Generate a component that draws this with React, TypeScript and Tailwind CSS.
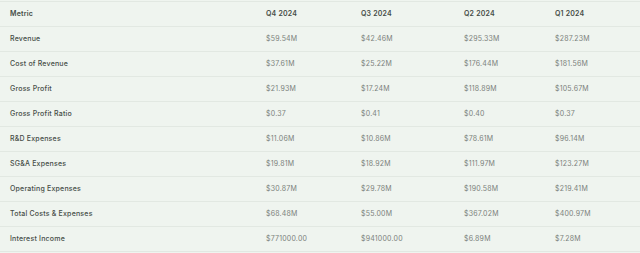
import React from "react"

const quarters = ["Q4 2024", "Q3 2024", "Q2 2024", "Q1 2024"]

const rows: [string, string[]][] = [
  ["Revenue", ["$59.54M", "$42.46M", "$295.33M", "$287.23M"]],
  ["Cost of Revenue", ["$37.61M", "$25.22M", "$176.44M", "$181.56M"]],
  ["Gross Profit", ["$21.93M", "$17.24M", "$118.89M", "$105.67M"]],
  ["Gross Profit Ratio", ["$0.37", "$0.41", "$0.40", "$0.37"]],
  ["R&D Expenses", ["$11.06M", "$10.86M", "$78.61M", "$96.14M"]],
  ["SG&A Expenses", ["$19.81M", "$18.92M", "$111.97M", "$123.27M"]],
  ["Operating Expenses", ["$30.87M", "$29.78M", "$190.58M", "$219.41M"]],
  ["Total Costs & Expenses", ["$68.48M", "$55.00M", "$367.02M", "$400.97M"]],
  ["Interest Income", ["$771000.00", "$941000.00", "$6.89M", "$7.28M"]],
]

const colW = ["w-[266px]", "w-[95px]", "w-[103px]", "w-[91px]"]

export default function App() {
  return (
    <div className="w-[640px] h-[253px] overflow-hidden bg-[#eff4ef] font-['Inter',sans-serif] text-[7px] tracking-[0.2px]">
      <div className="h-[2px] border-b border-[#e2e8e2]" />
      <div className="flex h-[25px] items-center border-b border-[#e2e8e2] font-semibold text-[#454c46]">
        <div className={`${colW[0]} pl-[10px]`}>Metric</div>
        {quarters.map((q, i) => (
          <div key={q} className={i < 3 ? colW[i + 1] : "flex-1"}>
            {q}
          </div>
        ))}
      </div>
      {rows.map(([label, vals]) => (
        <div key={label} className="flex h-[25px] items-center border-b border-[#e2e8e2]">
          <div className={`${colW[0]} pl-[10px] font-medium text-[#464d47]`}>{label}</div>
          {vals.map((v, i) => (
            <div key={i} className={`${i < 3 ? colW[i + 1] : "flex-1"} text-[#7b817c]`}>
              {v}
            </div>
          ))}
        </div>
      ))}
    </div>
  )
}
